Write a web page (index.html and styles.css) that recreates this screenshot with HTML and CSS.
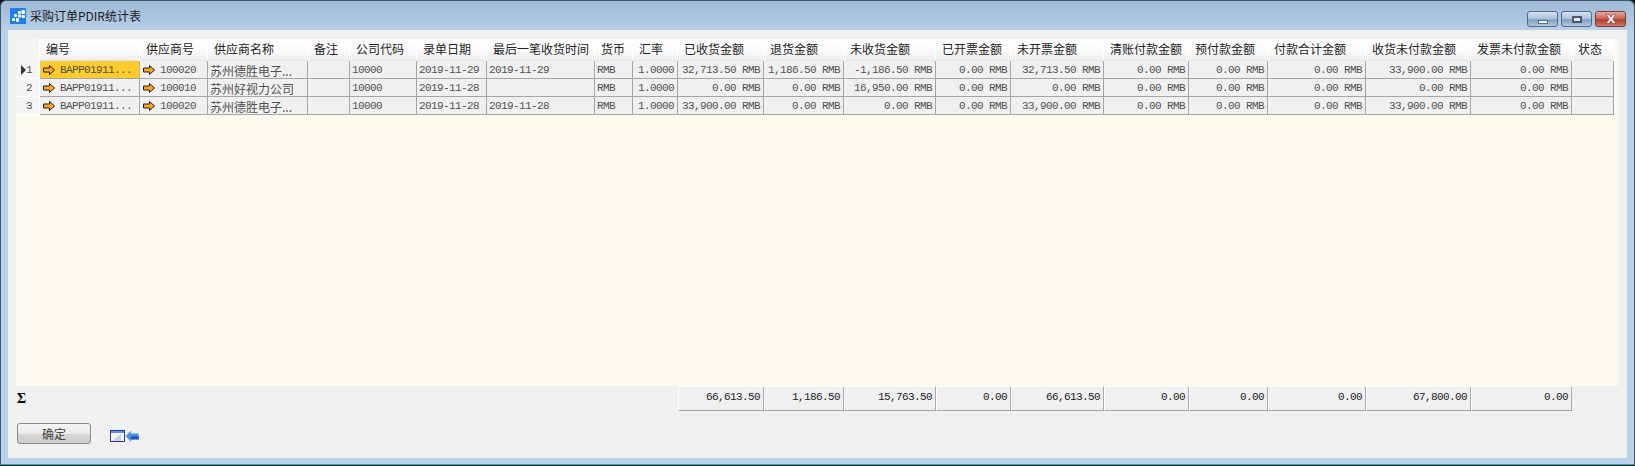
FILE: index.html
```html
<!DOCTYPE html>
<html lang="zh-CN">
<head>
    <meta charset="UTF-8">
    <title>采购订单PDIR统计表</title>
    <link rel="stylesheet" href="styles.css">
</head>
<body>

<div class="window">
    <!-- Title bar -->
    <div class="titlebar">
        <svg class="app-icon" width="16" height="16" viewBox="0 0 16 16">
            <rect width="16" height="16" fill="#1f7fe8"/>
            <rect x="8" y="3" width="3" height="3" rx="1" fill="#fff"/>
            <rect x="11.500" y="2" width="3.500" height="4" rx="1" fill="#fff"/>
            <rect x="4" y="6" width="3" height="3" rx="1" fill="#fff"/>
            <rect x="8" y="6.500" width="3" height="3" rx="1" fill="#fff"/>
            <rect x="11.500" y="7" width="3.500" height="3" rx="1" fill="#fff"/>
            <rect x="2" y="10" width="3" height="3" rx="1" fill="#fff"/>
            <rect x="6" y="10" width="3" height="4" rx="1" fill="#fff"/>
        </svg>
        <span class="title">采购订单PDIR统计表</span>
        <div class="win-buttons">
            <div class="win-btn"><span class="min-glyph"></span></div>
            <div class="win-btn"><span class="max-glyph"></span></div>
            <div class="win-btn close">
                <svg width="18" height="12" viewBox="0 0 18 12"><path d="M4 1.500h3l2 2.500 2-2.500h3L10.800 6 14 10.500h-3L9 8l-2 2.500H4L7.200 6z" fill="#f4eeee" stroke="#7d3a30" stroke-width=".6"/></svg>
            </div>
        </div>
    </div>

    <div class="client">
        <!-- Grid -->
        <div class="grid-area">
            <div class="row head">
                <div class="cell ind"></div>
                <div class="cell">编号</div>
                <div class="cell">供应商号</div>
                <div class="cell">供应商名称</div>
                <div class="cell">备注</div>
                <div class="cell">公司代码</div>
                <div class="cell">录单日期</div>
                <div class="cell">最后一笔收货时间</div>
                <div class="cell">货币</div>
                <div class="cell">汇率</div>
                <div class="cell">已收货金额</div>
                <div class="cell">退货金额</div>
                <div class="cell">未收货金额</div>
                <div class="cell">已开票金额</div>
                <div class="cell">未开票金额</div>
                <div class="cell">清账付款金额</div>
                <div class="cell">预付款金额</div>
                <div class="cell">付款合计金额</div>
                <div class="cell">收货未付款金额</div>
                <div class="cell">发票未付款金额</div>
                <div class="cell">状态</div>
            </div>

            <div class="row data">
                <div class="cell ind"><span class="pointer"></span>1</div>
                <div class="cell selected"><svg class="arrow" viewBox="0 0 12 10"><path d="M.5 3h6V.5L11.500 5 6.500 9.500V7h-6z" fill="#ffa51c" stroke="#222"/></svg>BAPP01911...</div>
                <div class="cell"><svg class="arrow" viewBox="0 0 12 10"><path d="M.5 3h6V.5L11.500 5 6.500 9.500V7h-6z" fill="#ffa51c" stroke="#222"/></svg>100020</div>
                <div class="cell cjk">苏州德胜电子...</div>
                <div class="cell"></div>
                <div class="cell">10000</div>
                <div class="cell">2019-11-29</div>
                <div class="cell">2019-11-29</div>
                <div class="cell">RMB</div>
                <div class="cell num">1.0000</div>
                <div class="cell num">32,713.50 RMB</div>
                <div class="cell num">1,186.50 RMB</div>
                <div class="cell num">-1,186.50 RMB</div>
                <div class="cell num">0.00 RMB</div>
                <div class="cell num">32,713.50 RMB</div>
                <div class="cell num">0.00 RMB</div>
                <div class="cell num">0.00 RMB</div>
                <div class="cell num">0.00 RMB</div>
                <div class="cell num">33,900.00 RMB</div>
                <div class="cell num">0.00 RMB</div>
                <div class="cell"></div>
            </div>

            <div class="row data">
                <div class="cell ind">2</div>
                <div class="cell"><svg class="arrow" viewBox="0 0 12 10"><path d="M.5 3h6V.5L11.500 5 6.500 9.500V7h-6z" fill="#ffa51c" stroke="#222"/></svg>BAPP01911...</div>
                <div class="cell"><svg class="arrow" viewBox="0 0 12 10"><path d="M.5 3h6V.5L11.500 5 6.500 9.500V7h-6z" fill="#ffa51c" stroke="#222"/></svg>100010</div>
                <div class="cell cjk">苏州好视力公司</div>
                <div class="cell"></div>
                <div class="cell">10000</div>
                <div class="cell">2019-11-28</div>
                <div class="cell"></div>
                <div class="cell">RMB</div>
                <div class="cell num">1.0000</div>
                <div class="cell num">0.00 RMB</div>
                <div class="cell num">0.00 RMB</div>
                <div class="cell num">16,950.00 RMB</div>
                <div class="cell num">0.00 RMB</div>
                <div class="cell num">0.00 RMB</div>
                <div class="cell num">0.00 RMB</div>
                <div class="cell num">0.00 RMB</div>
                <div class="cell num">0.00 RMB</div>
                <div class="cell num">0.00 RMB</div>
                <div class="cell num">0.00 RMB</div>
                <div class="cell"></div>
            </div>

            <div class="row data">
                <div class="cell ind">3</div>
                <div class="cell"><svg class="arrow" viewBox="0 0 12 10"><path d="M.5 3h6V.5L11.500 5 6.500 9.500V7h-6z" fill="#ffa51c" stroke="#222"/></svg>BAPP01911...</div>
                <div class="cell"><svg class="arrow" viewBox="0 0 12 10"><path d="M.5 3h6V.5L11.500 5 6.500 9.500V7h-6z" fill="#ffa51c" stroke="#222"/></svg>100020</div>
                <div class="cell cjk">苏州德胜电子...</div>
                <div class="cell"></div>
                <div class="cell">10000</div>
                <div class="cell">2019-11-28</div>
                <div class="cell">2019-11-28</div>
                <div class="cell">RMB</div>
                <div class="cell num">1.0000</div>
                <div class="cell num">33,900.00 RMB</div>
                <div class="cell num">0.00 RMB</div>
                <div class="cell num">0.00 RMB</div>
                <div class="cell num">0.00 RMB</div>
                <div class="cell num">33,900.00 RMB</div>
                <div class="cell num">0.00 RMB</div>
                <div class="cell num">0.00 RMB</div>
                <div class="cell num">0.00 RMB</div>
                <div class="cell num">33,900.00 RMB</div>
                <div class="cell num">0.00 RMB</div>
                <div class="cell"></div>
            </div>
        </div>

        <!-- Totals -->
        <div class="row totals">
            <div class="sigma">Σ</div>
            <div class="cell num">66,613.50</div>
            <div class="cell num">1,186.50</div>
            <div class="cell num">15,763.50</div>
            <div class="cell num">0.00</div>
            <div class="cell num">66,613.50</div>
            <div class="cell num">0.00</div>
            <div class="cell num">0.00</div>
            <div class="cell num">0.00</div>
            <div class="cell num">67,800.00</div>
            <div class="cell num">0.00</div>
        </div>

        <!-- Footer -->
        <div class="footer">
            <button class="btn">确定</button>
            <svg class="restore-icon" width="30" height="13" viewBox="0 0 30 13">
                <rect x=".5" y=".5" width="14" height="11" fill="#f4f6fb" stroke="#2b3a86"/>
                <rect x="1" y="1" width="13" height="2" fill="#5b8def"/>
                <path d="M2 11L11 4v7z" fill="#c6cee4"/>
                <path d="M15.500 6L21 .8V3.500h7.500v5.500H21v2.700z" fill="#4d8fe0" stroke="#9dc0ec" stroke-width=".8"/>
                <rect x="21" y="6.500" width="8" height="3" fill="#1f55b8"/>
            </svg>
        </div>
    </div>
</div>

</body>
</html>
```

FILE: styles.css
```css
html, body {
    margin: 0;
    padding: 0;
    height: 466px;
    overflow: hidden;
    background-color: #111;
}
.window {
    height: 463px;
    border-top: 1px solid #44566a;
    border-left: 1px solid #44566a;
    border-right: 1px solid #44566a;
    border-bottom: 1px solid #12b5c8;
    border-radius: 6px 6px 0 0;
    background: linear-gradient(#9db9d6 0, #b9d1ea 30px);
    display: flex;
    flex-direction: column;
    font-family: "Liberation Mono", "Noto Sans CJK SC", monospace;
    font-size: 11px;
    letter-spacing: -0.6px;
    color: #505050;
}

/* title bar */
.titlebar {
    height: 29px;
    display: flex;
    align-items: center;
    padding: 0 8px 0 9px;
    flex-shrink: 0;
}
.app-icon {
    margin-right: 4px;
}
.title {
    font-family: "Noto Sans CJK SC", "Liberation Sans", sans-serif;
    font-size: 12px;
    letter-spacing: 0;
    color: #1a1a1a;
}
.win-buttons {
    margin-left: auto;
    display: flex;
    gap: 3px;
    margin-top: 7px;
}
.win-btn {
    width: 29px;
    height: 14px;
    border: 1px solid #4f6b8c;
    border-radius: 3px;
    background: linear-gradient(#d6e2ef 0, #a9c1da 50%, #7f9dbd 55%, #b1c8df 100%);
    display: flex;
    align-items: center;
    justify-content: center;
}
.win-btn.close {
    border-color: #7d3a30;
    background: linear-gradient(#e8a9a0 0, #c8604f 50%, #b03d2b 55%, #d07a68 100%);
}
.min-glyph {
    width: 8px;
    height: 2px;
    margin-top: 5px;
    background: #eef2f6;
    border: 1px solid #5a6d82;
}
.max-glyph {
    width: 6px;
    height: 3px;
    background: #dfe8f2;
    border: 2px solid #46586c;
}

/* client area */
.client {
    flex: 1;
    margin: 0 7px 6px;
    background-color: #f0f0f0;
    padding: 9px 9px 0 8px;
    display: flex;
    flex-direction: column;
    min-height: 0;
}
.grid-area {
    height: 347px;
    background-color: #fcf9ee;
    flex-shrink: 0;
}
.row {
    display: grid;
    grid-template-columns: 24px 100px 68px 100px 42px 67px 70px 108px 38px 45px 86px 80px 92px 75px 93px 85px 79px 98px 105px 101px 42px;
}
.cell {
    box-sizing: border-box;
    white-space: nowrap;
    overflow: hidden;
}

/* header row */
.head {
    height: 22px;
    font-family: "Noto Sans CJK SC", sans-serif;
    font-size: 12px;
    letter-spacing: 0;
    color: #222;
    line-height: 20px;
}
.head .cell {
    padding-left: 6px;
    background: linear-gradient(#ffffff 0, #fbfbfb 50%, #eeeeee 100%);
    border-right: 1px solid #fff;
    border-bottom: 1px solid #e4e4e4;
}
.head .ind {
    background: #f5f5f5;
    border-bottom: none;
}

/* data rows */
.data {
    height: 18px;
    line-height: 17px;
}
.data .cell {
    padding-top: 1px;
    padding-left: 2px;
    background-color: #f0f0f0;
    border-right: 1px solid #a5a5a5;
    border-bottom: 1px solid #a5a5a5;
    display: flex;
    align-items: center;
}
.data .ind {
    background-color: #f5f5f5;
    border: none;
    border-right: 1px solid #fff;
    border-bottom: 1px solid #fff;
    justify-content: flex-end;
    padding: 1px 7px 0 0;
    position: relative;
}
.data .selected {
    background-color: #fdcb2b;
    border-right-color: #c8b060;
}
.data .cjk {
    font-family: "Noto Sans CJK SC", sans-serif;
    font-size: 12px;
    letter-spacing: 0;
}
.data .num {
    justify-content: flex-end;
    padding-right: 3px;
    padding-left: 0;
}
.arrow {
    width: 12px;
    height: 10px;
    margin: 0 5px 0 1px;
    flex-shrink: 0;
}
.pointer {
    position: absolute;
    left: 5px;
    top: 4px;
    border-left: 5px solid #333;
    border-top: 5px solid transparent;
    border-bottom: 5px solid transparent;
}

/* totals */
.totals {
    height: 23px;
    grid-template-columns: 662px 86px 80px 92px 75px 93px 85px 79px 98px 105px 101px;
    color: #222;
}
.totals .cell {
    background-color: #f0f0f0;
    border-top: 1px solid #fff;
    border-left: 1px solid #fff;
    border-right: 1px solid #aaa;
    border-bottom: 1px solid #a5a5a5;
    text-align: right;
    padding-right: 3px;
    line-height: 21px;
}
.sigma {
    font-family: "Liberation Serif", serif;
    font-size: 14px;
    font-weight: bold;
    letter-spacing: 0;
    color: #000;
    padding-left: 1px;
    line-height: 25px;
}

/* footer */
.footer {
    display: flex;
    align-items: center;
    margin-top: 14px;
}
.btn {
    width: 74px;
    height: 21px;
    padding: 0;
    border: 1px solid #8a8a8a;
    border-radius: 3px;
    background: linear-gradient(#f4f4f4 0, #ebebeb 50%, #d6d6d6 52%, #cdcdcd 100%);
    font-family: "Noto Sans CJK SC", sans-serif;
    font-size: 12px;
    color: #444;
    margin-left: 1px;
}
.restore-icon {
    margin-left: 19px;
    margin-top: 6px;
}
```
